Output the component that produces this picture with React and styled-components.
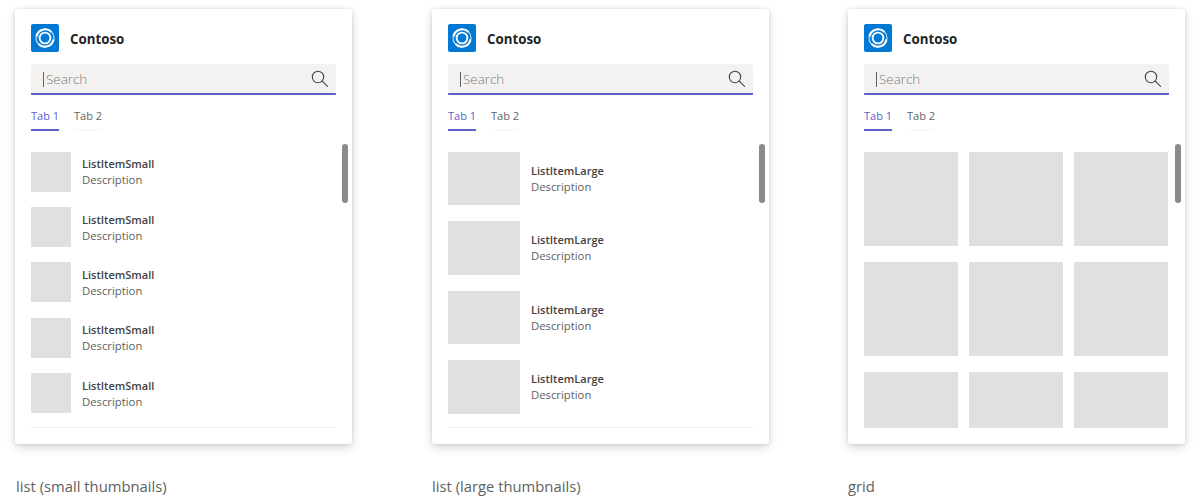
import styled, { createGlobalStyle } from "styled-components";

const FONT = `"Open Sans", "Noto Sans", "Liberation Sans", sans-serif`;

const GlobalStyle = createGlobalStyle`
  html, body {
    margin: 0;
    padding: 0;
    background: #fff;
  }
  body {
    font-family: ${FONT};
  }
`;

const LogoIcon = () => (
  <svg width="28" height="28" viewBox="0 0 28 28">
    <rect width="28" height="28" rx="2" fill="#0078d4" />
    <circle cx="14" cy="14" r="9" fill="none" stroke="#fff" strokeWidth="1.2" opacity="0.75" />
    <path d="M5.5 12.5A8.8 8.8 0 0 1 20.5 8" fill="none" stroke="#fff" strokeWidth="2" />
    <path d="M22.5 15.5A8.8 8.8 0 0 1 7.5 20" fill="none" stroke="#fff" strokeWidth="2" />
    <circle cx="14" cy="14" r="5.4" fill="none" stroke="#fff" strokeWidth="1.9" />
  </svg>
);

const SearchIcon = () => (
  <svg width="18" height="18" viewBox="0 0 18 18" fill="none" stroke="#424242" strokeWidth="1.1">
    <circle cx="7" cy="7" r="5.7" />
    <path d="M11.2 11.2L16.6 16.4" strokeLinecap="round" />
  </svg>
);

const ListBody = ({ title, count, w, h, gap }) => (
  <List $gap={gap}>
    {Array.from({ length: count }, (_, i) => (
      <Row key={i}>
        <Thumb $w={w} $h={h} />
        <ItemText>
          <ItemTitle>{title}</ItemTitle>
          <ItemDesc>Description</ItemDesc>
        </ItemText>
      </Row>
    ))}
  </List>
);

const Panel = ({ children, divider }) => (
  <Card>
    <Header>
      <LogoIcon />
      <Brand>Contoso</Brand>
    </Header>
    <SearchBox>
      <Caret />
      <Placeholder>Search</Placeholder>
      <SearchIcon />
    </SearchBox>
    <Tabs>
      <Tab $active>Tab 1</Tab>
      <Tab>Tab 2</Tab>
    </Tabs>
    <Body $divider={divider}>{children}</Body>
    <Scrollbar />
  </Card>
);

export default function App() {
  return (
    <Page>
      <GlobalStyle />
      <Column>
        <Panel divider>
          <ListBody title="ListItemSmall" count={5} w={40} h={40} gap={15.4} />
        </Panel>
        <Caption $inset={1}>list (small thumbnails)</Caption>
      </Column>
      <Column $left={80}>
        <Panel divider>
          <ListBody title="ListItemLarge" count={4} w={72} h={53.6} gap={15.9} />
        </Panel>
        <Caption>list (large thumbnails)</Caption>
      </Column>
      <Column $left={79}>
        <Panel>
          <GridBody>
            {Array.from({ length: 9 }, (_, i) => (
              <Thumb key={i} $w={94} $h={94} />
            ))}
          </GridBody>
        </Panel>
        <Caption>grid</Caption>
      </Column>
    </Page>
  );
}

const Page = styled.div`
  display: flex;
  width: 1200px;
  height: 498px;
  padding: 9px 0 0 15px;
  box-sizing: border-box;
  overflow: hidden;
`;

const Column = styled.div`
  display: flex;
  flex-direction: column;
  width: 337px;
  margin-left: ${(p) => p.$left || 0}px;
`;

const Card = styled.div`
  position: relative;
  display: flex;
  flex-direction: column;
  height: 435px;
  padding: 15px 16px 16px;
  box-sizing: border-box;
  background: #fff;
  border-radius: 3px;
  box-shadow: 0 3px 10px rgba(0, 0, 0, 0.18), 0 0 3px rgba(0, 0, 0, 0.1);
`;

const Header = styled.div`
  display: flex;
  align-items: center;
  gap: 11px;
  height: 28px;
`;

const Brand = styled.div`
  padding-top: 2px;
  font-size: 13.3px;
  font-weight: 700;
  color: #242424;
`;

const SearchBox = styled.div`
  display: flex;
  align-items: center;
  height: 31px;
  margin-top: 12px;
  padding: 0 7px 0 12px;
  box-sizing: border-box;
  background: #f3f2f1;
  border-bottom: 2px solid #5b5fc7;
  border-radius: 2px 2px 1px 1px;
`;

const Caret = styled.span`
  width: 1px;
  height: 15px;
  margin: 1px 2px 0 0;
  background: #616161;
`;

const Placeholder = styled.span`
  flex: 1;
  font-size: 13.4px;
  font-weight: 300;
  color: #7c7a78;
`;

const Tabs = styled.div`
  display: flex;
  gap: 15px;
  margin-top: 11px;
  height: 26px;
`;

const Tab = styled.div`
  height: 25px;
  box-sizing: border-box;
  font-size: 11px;
  line-height: 20px;
  color: ${(p) => (p.$active ? "#5b5fc7" : "#616161")};
  border-bottom: 2px solid ${(p) => (p.$active ? "#5b5fc7" : "#fafafa")};
`;

const Body = styled.div`
  flex: 1;
  min-height: 0;
  margin-top: 19.7px;
  overflow: hidden;
  border-bottom: ${(p) => (p.$divider ? "1px solid #f0f0f0" : "none")};
`;

const List = styled.div`
  display: flex;
  flex-direction: column;
  gap: ${(p) => p.$gap}px;
`;

const Row = styled.div`
  display: flex;
  align-items: center;
  gap: 11px;
`;

const Thumb = styled.div`
  flex: none;
  width: ${(p) => p.$w}px;
  height: ${(p) => p.$h}px;
  background: #e0e0e0;
`;

const ItemText = styled.div`
  padding-top: 1px;
`;

const ItemTitle = styled.div`
  font-size: 11px;
  font-weight: 600;
  line-height: 16px;
  color: #424242;
`;

const ItemDesc = styled.div`
  font-size: 11.3px;
  line-height: 16px;
  color: #616161;
`;

const GridBody = styled.div`
  display: grid;
  grid-template-columns: repeat(3, 94px);
  column-gap: 11px;
  row-gap: 16px;
  padding-top: 0.3px;
`;

const Scrollbar = styled.div`
  position: absolute;
  top: 135px;
  right: 4px;
  width: 6px;
  height: 59px;
  border-radius: 3px;
  background: #8a8a8a;
`;

const Caption = styled.div`
  margin-top: 32px;
  padding-left: ${(p) => p.$inset || 0}px;
  font-size: 14.8px;
  line-height: 20px;
  color: #616161;
`;
